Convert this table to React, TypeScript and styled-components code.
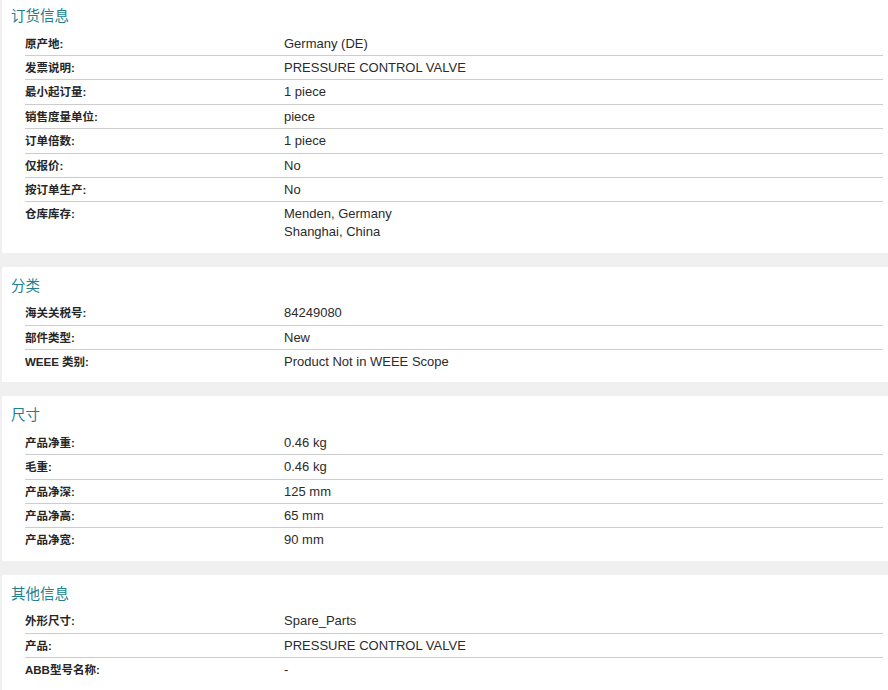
import React from "react";
import styled, { createGlobalStyle } from "styled-components";

const GlobalStyle = createGlobalStyle`
  html, body {
    margin: 0;
    padding: 0;
    background: #f0f0f0;
  }
  body {
    font-family: "Liberation Sans", "Noto Sans CJK SC", sans-serif;
    color: #333;
  }
`;

/* Styles */
const Page = styled.div`
  width: 888px;
  height: 690px;
  overflow: hidden;
  display: flex;
  flex-direction: column;
  gap: 13.8px;
  padding-left: 2px;
  box-sizing: border-box;
`;

const Card = styled.section`
  background: #ffffff;
  padding: 8px 5px 9px 0;
  flex-shrink: 0;

  &:first-child {
    padding-top: 5px;
  }

  &:last-child {
    flex: 1 0 auto;
  }
`;

const Title = styled.h2`
  margin: 0 0 6.5px 9px;
  font-family: "Noto Sans CJK SC", sans-serif;
  font-size: 14.5px;
  font-weight: 400;
  line-height: 20px;
  color: #217f8e;
`;

const Rows = styled.div`
  margin-left: 23px;
  display: flex;
  flex-direction: column;
`;

const Row = styled.div`
  display: grid;
  grid-template-columns: 259px 1fr;
  padding: 3px 0 2.43px;
  border-bottom: 1px solid #cdcdcd;

  &:last-child {
    border-bottom: none;
  }
`;

const Label = styled.div`
  font-family: "Liberation Sans", "Noto Sans CJK SC", sans-serif;
  font-size: 11.5px;
  font-weight: 700;
  line-height: 18px;
  color: #262626;
`;

const Value = styled.div`
  font-family: "Liberation Sans", sans-serif;
  font-size: 13px;
  line-height: 18px;
  color: #2b2b2b;
`;

/* Data */
interface ISection {
  title: string;
  rows: [string, string[]][];
}

const sections: ISection[] = [
  {
    title: "订货信息",
    rows: [
      ["原产地:", ["Germany (DE)"]],
      ["发票说明:", ["PRESSURE CONTROL VALVE"]],
      ["最小起订量:", ["1 piece"]],
      ["销售度量单位:", ["piece"]],
      ["订单倍数:", ["1 piece"]],
      ["仅报价:", ["No"]],
      ["按订单生产:", ["No"]],
      ["仓库库存:", ["Menden, Germany", "Shanghai, China"]],
    ],
  },
  {
    title: "分类",
    rows: [
      ["海关关税号:", ["84249080"]],
      ["部件类型:", ["New"]],
      ["WEEE 类别:", ["Product Not in WEEE Scope"]],
    ],
  },
  {
    title: "尺寸",
    rows: [
      ["产品净重:", ["0.46 kg"]],
      ["毛重:", ["0.46 kg"]],
      ["产品净深:", ["125 mm"]],
      ["产品净高:", ["65 mm"]],
      ["产品净宽:", ["90 mm"]],
    ],
  },
  {
    title: "其他信息",
    rows: [
      ["外形尺寸:", ["Spare_Parts"]],
      ["产品:", ["PRESSURE CONTROL VALVE"]],
      ["ABB型号名称:", ["-"]],
    ],
  },
];

/* Main Component */
export default function App() {
  return (
    <>
      <GlobalStyle />
      <Page>
        {sections.map((section) => (
          <Card key={section.title}>
            <Title>{section.title}</Title>
            <Rows>
              {section.rows.map(([label, values]) => (
                <Row key={label}>
                  <Label>{label}</Label>
                  <Value>
                    {values.map((v) => (
                      <div key={v}>{v}</div>
                    ))}
                  </Value>
                </Row>
              ))}
            </Rows>
          </Card>
        ))}
      </Page>
    </>
  );
}
